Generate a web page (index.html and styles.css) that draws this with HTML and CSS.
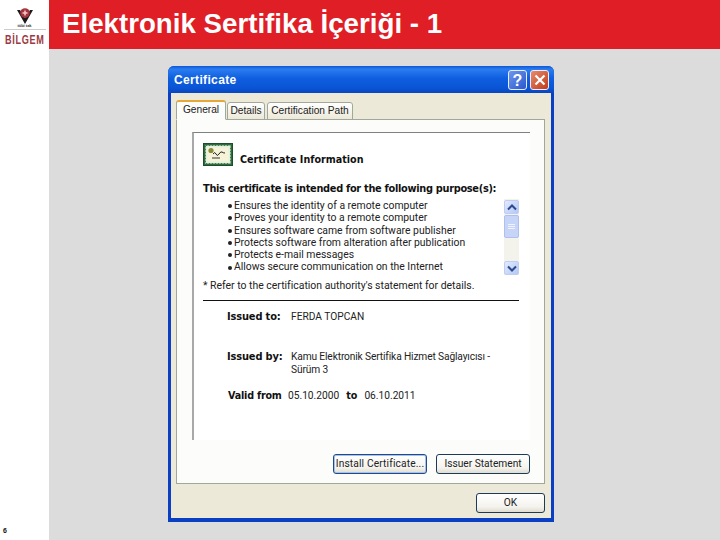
FILE: index.html
```html
<!DOCTYPE html>
<html lang="tr">
<head>
<meta charset="utf-8">
<title>Elektronik Sertifika İçeriği - 1</title>
<link rel="stylesheet" href="styles.css">
</head>
<body>
<div class="slide">
  <aside class="side">
    <div class="logo">
      <svg class="logo-mark" width="16" height="16" viewBox="0 0 16 16">
        <path d="M0 2 L3 2 L8 10 L13 2 L16 2 L8 16 Z" fill="#1c1c1c"/>
        <circle cx="8" cy="5" r="4.8" fill="#a8323a"/>
        <path d="M8 1.5 L9 4 L11.5 5 L9 6 L8 8.5 L7 6 L4.5 5 L7 4 Z" fill="#e9c4c4"/>
      </svg>
      <div class="logo-small">tübi tak</div>
      <div class="logo-name">BİLGEM</div>
    </div>
    <div class="page-no">6</div>
  </aside>
  <main class="main">
    <header class="head"><h1 class="title">Elektronik Sertifika İçeriği - 1</h1></header>
    <section class="stage">
      <div class="window">
        <div class="titlebar">
          <span class="win-title">Certificate</span>
          <span class="win-btn help">?</span>
          <span class="win-btn close">
            <svg width="14" height="14" viewBox="0 0 14 14"><path d="M2.5 2.5 L11.5 11.5 M11.5 2.5 L2.5 11.5" stroke="#fff" stroke-width="2.2"/></svg>
          </span>
        </div>
        <div class="client">
          <div class="tabs">
            <span class="tab active">General</span>
            <span class="tab details">Details</span>
            <span class="tab path">Certification Path</span>
          </div>
          <div class="panel">
            <div class="sheet">
              <div class="info-head">
                <svg class="cert" width="30" height="23" viewBox="0 0 30 23">
                  <rect x="0.5" y="0.5" width="29" height="22" fill="#2f6b3c" stroke="#1e4d2a"/>
                  <rect x="2" y="2" width="26" height="19" fill="#e6f0e0"/>
                  <rect x="2.5" y="2.5" width="25" height="18" fill="none" stroke="#3f7f4c" stroke-dasharray="2 1"/>
                  <rect x="4.5" y="4.5" width="21" height="14" fill="#f6f3d8"/>
                  <circle cx="8" cy="7.5" r="2.6" fill="#8a8a3a"/>
                  <path d="M10 11 q2-3 3 0 t3 0 t3-2 t3 1" fill="none" stroke="#222" stroke-width="1"/>
                  <path d="M9 15 H17" stroke="#333" stroke-width="1"/>
                </svg>
                <span class="info-title">Certificate Information</span>
              </div>
              <p class="purpose">This certificate is intended for the following purpose(s):</p>
              <div class="listbox">
                <ul class="list">
                  <li>Ensures the identity of a remote computer</li>
                  <li>Proves your identity to a remote computer</li>
                  <li>Ensures software came from software publisher</li>
                  <li>Protects software from alteration after publication</li>
                  <li>Protects e-mail messages</li>
                  <li>Allows secure communication on the Internet</li>
                </ul>
                <div class="scroll">
                  <span class="arrow">
                    <svg width="10" height="7" viewBox="0 0 10 7"><path d="M1 5.5 L5 1.5 L9 5.5" fill="none" stroke="#2d4a8c" stroke-width="2"/></svg>
                  </span>
                  <span class="thumb"><i></i><i></i><i></i></span>
                  <span class="track"></span>
                  <span class="arrow">
                    <svg width="10" height="7" viewBox="0 0 10 7"><path d="M1 1.5 L5 5.5 L9 1.5" fill="none" stroke="#2d4a8c" stroke-width="2"/></svg>
                  </span>
                </div>
              </div>
              <p class="note">* Refer to the certification authority's statement for details.</p>
              <hr class="rule">
              <div class="row issued-to"><b class="label">Issued to:</b><span>FERDA TOPCAN</span></div>
              <div class="row issued-by"><b class="label">Issued by:</b><span class="issuer-name">Kamu Elektronik Sertifika Hizmet Sağlayıcısı -<br>Sürüm 3</span></div>
              <div class="row valid"><b class="label-v">Valid from</b><span>05.10.2000</span><b class="to">to</b><span>06.10.2011</span></div>
            </div>
            <div class="actions">
              <span class="btn focus">Install Certificate...</span>
              <span class="btn issuer">Issuer Statement</span>
            </div>
          </div>
          <div class="footer"><span class="btn ok">OK</span></div>
        </div>
      </div>
    </section>
  </main>
</div>
</body>
</html>
```

FILE: styles.css
```css
* { box-sizing: border-box; }
html, body { margin: 0; padding: 0; }
body { width: 720px; height: 540px; overflow: hidden; background: #fff; font-family: "Liberation Sans", Arial, sans-serif; }
p, ul, h1 { margin: 0; padding: 0; }

.slide { display: flex; width: 720px; height: 540px; }

.side { width: 49px; flex: none; display: flex; flex-direction: column; justify-content: space-between; background: #fff; }
.logo { display: flex; flex-direction: column; align-items: center; padding-top: 8px; }
.logo-mark { display: block; }
.logo-small { font-size: 4px; line-height: 4px; font-weight: 700; color: #333; border-bottom: 1px solid #ccc; width: 42px; text-align: center; padding-bottom: 1px; }
.logo-name { font-size: 11px; line-height: 11px; font-weight: 700; color: #9c3a44; letter-spacing: .8px; margin-top: 4px; white-space: nowrap; transform: scale(.83, 1.15); }
.page-no { font-size: 7px; line-height: 8px; font-weight: 700; color: #111; padding: 0 0 5px 3px; }

.main { flex: 1; display: flex; flex-direction: column; min-width: 0; }
.head { height: 49px; flex: none; background: #e01e26; padding-left: 13px; }
.title { font-size: 27.7px; line-height: 48px; font-weight: 700; color: #fff; white-space: nowrap; }
.stage { flex: 1; background: #dcdcdc; padding: 17px 0 0 119px; }

.window { width: 386px; height: 456px; background: #0a3fc4; border-radius: 6px 6px 0 0; padding: 0 3px 4px 3px; display: flex; flex-direction: column; }
.titlebar { height: 27px; flex: none; display: flex; align-items: center; gap: 3px; margin: 0 -3px; padding: 1px 5px 0 6px; border-radius: 6px 6px 0 0; background: linear-gradient(#0b58d8 0, #2b7cf0 12%, #0f5fe0 45%, #0a55d6 80%, #0a46c0 100%); }
.win-title { flex: 1; font: 700 12px/16px "Liberation Sans", sans-serif; color: #fff; letter-spacing: .35px; }
.win-btn { width: 19px; height: 20px; border: 1px solid #e8eefc; border-radius: 3px; display: flex; align-items: center; justify-content: center; color: #fff; font: 700 16px/17px "Liberation Sans", sans-serif; }
.help { background: linear-gradient(135deg, #6f97ee, #2a58cc); }
.close { background: linear-gradient(135deg, #e88a6c, #c03a1c); }

.client { flex: 1; background: #ece9d8; padding: 6px 6px 0 5px; display: flex; flex-direction: column; }
.tabs { display: flex; height: 21px; align-items: flex-end; position: relative; z-index: 1; margin-bottom: -1px; }
.tab { font: 10.2px/16px "Liberation Sans", sans-serif; color: #222; height: 18px; padding: 0 1px; background: linear-gradient(#fff, #ece9d8); border: 1px solid #a0a89c; border-radius: 3px 3px 0 0; white-space: nowrap; text-align: center; }
.tab.active { width: 50px; height: 20px; margin-right: 1px; background: #fcfcfa; border-top: 2px solid #e8a838; border-bottom-color: #fcfcfa; line-height: 15px; }
.tab.details { width: 38px; margin-right: 2px; }
.tab.path { width: 86px; }

.panel { height: 365px; background: #fcfcfa; border: 1px solid #a0a89c; padding: 12px 14px 0 15px; }
.sheet { height: 308px; background: #fff; border-top: 1px solid #808080; border-left: 2px solid #a8a8a8; padding: 10px 10px 0 9px; }

.info-head { display: flex; gap: 7px; height: 23px; }
.cert { flex: none; }
.info-title { font: 700 9.6px/14px "DejaVu Sans", sans-serif; color: #111; padding-top: 10px; }
.purpose { margin-top: 16px; font: 700 9.8px/14px "DejaVu Sans", sans-serif; color: #111; white-space: nowrap; letter-spacing: -.3px; }

.listbox { display: flex; margin-top: 3px; height: 76px; }
.list { list-style: none; width: 281px; padding-left: 25px; padding-top: 1px; }
.list li { font: 10.4px/12.3px "Roboto", sans-serif; color: #222; white-space: nowrap; display: flex; align-items: center; }
.list li::before { content: ""; width: 4px; height: 4px; border-radius: 50%; background: #222; margin-right: 2px; flex: none; }

.scroll { width: 15px; margin-left: 20px; display: flex; flex-direction: column; background: #f3f3ec; padding-top: 1px; }
.arrow { height: 14px; flex: none; border-radius: 2px; background: linear-gradient(135deg, #e2eafe, #b4c8f6); border: 1px solid #bfcdf0; display: flex; align-items: center; justify-content: center; }
.thumb { height: 23px; margin-top: 1px; flex: none; border-radius: 2px; background: #c6d4f8; border: 1px solid #aebff0; display: flex; flex-direction: column; align-items: center; justify-content: center; gap: 1px; }
.thumb i { display: block; width: 7px; height: 1px; background: #eef3ff; }
.track { flex: 1; }

.note { margin-top: 4px; font: 10.45px/14px "Roboto", sans-serif; color: #222; white-space: nowrap; }
.rule { margin: 7px 0 0 0; height: 1px; border: 0; background: #111; width: 316px; }

.row { display: flex; font: 10.2px/12.3px "Roboto", sans-serif; color: #222; padding-left: 24px; white-space: nowrap; }
.label { width: 64px; flex: none; font: 700 9.9px/12.3px "DejaVu Sans", sans-serif; color: #111; letter-spacing: -.15px; }
.label-v { width: 60px; flex: none; font: 700 9.6px/12.3px "DejaVu Sans", sans-serif; color: #111; letter-spacing: -.2px; margin-left: 1px; }
.issuer-name { letter-spacing: -.13px; }
.issued-to { margin-top: 10px; }
.issued-by { margin-top: 28px; }
.valid { margin-top: 14px; }
.to { font: 700 9.6px/12.3px "DejaVu Sans", sans-serif; margin: 0 7px; color: #111; }

.actions { display: flex; justify-content: flex-end; gap: 9px; margin-top: 14px; }
.btn { display: flex; align-items: center; justify-content: center; height: 20px; font: 10.2px/18px "Roboto", sans-serif; color: #222; background: linear-gradient(#fff, #f4f3ee 70%, #e0ddd0); border: 1px solid #1c3a5c; border-radius: 3px; white-space: nowrap; }
.btn.focus { width: 94px; box-shadow: inset 0 0 0 1px #a8c0ec; border-color: #1e4a8c; letter-spacing: .15px; }
.btn.issuer { width: 94px; }
.footer { display: flex; justify-content: flex-end; margin-top: 9px; }
.btn.ok { width: 69px; }
```
